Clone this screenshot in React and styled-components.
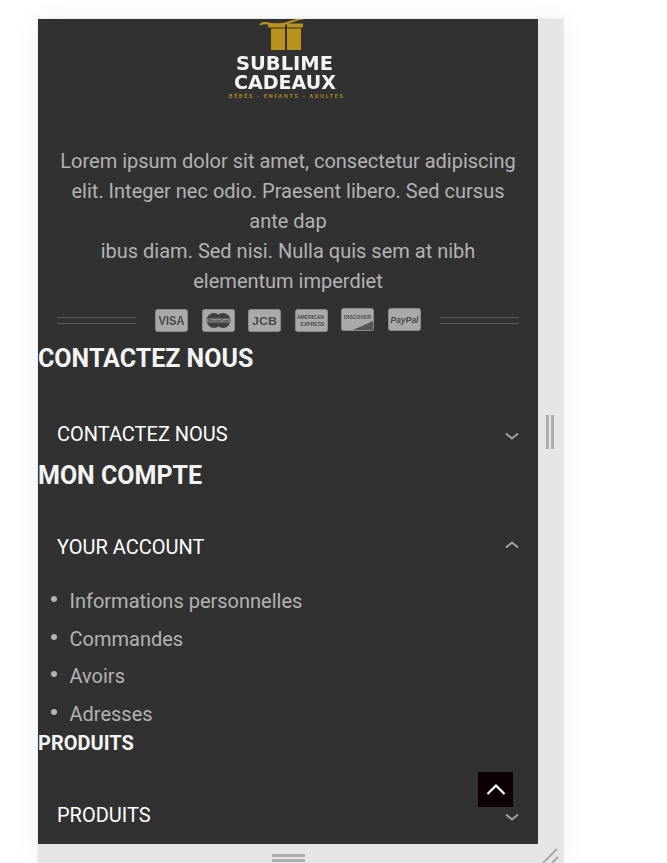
import React from 'react';
import styled, { createGlobalStyle } from 'styled-components';

const Global = createGlobalStyle`
  html, body { margin: 0; padding: 0; background: #fff; }
  body { font-family: Roboto, "Liberation Sans", sans-serif; overflow: hidden; }
  * { box-sizing: border-box; }
`;
const Page = styled.div`
  width: 667px; height: 863px; padding: 19px 0 0 38px; overflow: hidden;
`;
const Frame = styled.div`
  position: relative;
  width: 525px; height: 844px; background: #e6e6e6;
  display: grid; grid-template-columns: 500px 25px; grid-template-rows: 825px 19px;
  box-shadow: 0 0 0 1px #ececec, 0 0 24px rgba(0,0,0,.06);
`;
const Panel = styled.main`
  background: #313131; overflow: hidden; display: flex; flex-direction: column; position: relative;
`;
const LogoWrap = styled.div`
  height: 88px; display: flex; justify-content: center; margin-left: -4px;
`;
const Intro = styled.p`
  margin: 39px 0 0; padding: 0 19px; text-align: center; color: #b3b3b3;
  font-size: 20px; line-height: 30px;
`;
const PayRow = styled.div`
  display: flex; align-items: center; padding: 0 19px; margin-top: 11px; height: 26px;
`;
const Rule = styled.span`
  flex: 1; height: 7px; border-top: 1px solid #5c5c5c; border-bottom: 1px solid #5c5c5c;
`;
const Cards = styled.div`
  display: flex; gap: 13.6px; margin: 1px 19px 0; filter: blur(.35px);
`;
const Heading = styled.h2`
  margin: ${p => p.$top}px 0 0; color: #f4f4f4; font-weight: 700;
  font-size: ${p => p.$size}px; line-height: ${p => p.$lh}px;
`;
const AccRow = styled.div`
  display: flex; align-items: center; justify-content: space-between;
  margin-top: ${p => p.$top}px; padding: 0 18px 0 19px; height: 24px;
  color: #fff; font-size: 20px;
`;
const ChevronMark = styled.svg`
  transform: translateY(${p => (p.$up ? -2 : 2)}px);
`;
const List = styled.ul`
  list-style: none; margin: 24px 0 0; padding: 0 0 0 31.5px; color: #b3b3b3; font-size: 20px;
`;
const Item = styled.li`
  position: relative; height: 37.6px; line-height: 37.6px;
  &::before {
    content: ''; position: absolute; left: -19px; top: 13px; width: 6px; height: 6px;
    border-radius: 50%; background: #b3b3b3;
  }
`;
const TopBtn = styled.button`
  position: absolute; left: 440px; top: 753px; width: 35px; height: 35px; border: 0; padding: 0;
  background: #0b0003; display: flex; align-items: center; justify-content: center;
`;
const SideBar = styled.div`
  display: flex; align-items: center; justify-content: center;
`;
const VGrip = styled.div`
  width: 8px; height: 34px; margin: 1px 1px 0 0;
  border-left: 3px solid #aeaeae; border-right: 3px solid #aeaeae;
`;
const BottomBar = styled.div`
  grid-column: 1 / span 2; position: relative; display: flex; justify-content: center;
  padding: 10px 0 0 0;
`;
const HGrip = styled.div`
  width: 33px; height: 8px; border-top: 3px solid #aeaeae; border-bottom: 3px solid #aeaeae; margin-right: 25px;
`;
const Corner = styled.svg`
  position: absolute; right: 3px; bottom: 0;
`;
const LogoSvg = styled.svg`
  filter: blur(.4px);
`;

const Chevron = ({ up }) => (
  <ChevronMark $up={up} width="16" height="16" viewBox="0 0 16 16" fill="none" stroke="#a0a0a0" strokeWidth="2">
    <path d={up ? 'M2 10.5 8 5.5l6 5' : 'M2 5.5 8 10.5l6-5'} />
  </ChevronMark>
);

const logoFont = { textAnchor: 'middle', fontFamily: "'DejaVu Sans', sans-serif", fontWeight: 700, fontSize: 20, fill: '#f4f4f4', lengthAdjust: 'spacingAndGlyphs' };

const Logo = () => (
  <LogoSvg width="120" height="88" viewBox="0 0 120 88">
    <path d="M34 6c2-3 6-2 12-1 8 1 14 0 18-2 5-2 10-3 15-4" stroke="#b8921c" strokeWidth="2" fill="none" />
    <path d="M42 4.5h17v4H42zM61 4.5h16v4H61zM45 9.5h14V31H45zM61 9.5h14V31H61z" fill="#b8921c" />
    <text x="58.5" y="51" textLength="97" {...logoFont}>SUBLIME</text>
    <text x="59" y="70" textLength="102" {...logoFont}>CADEAUX</text>
    <text x="60" y="79" textAnchor="middle" fontFamily="Roboto, sans-serif" fontWeight="700" fontSize="5.6" fill="#a98a1f" textLength="114" lengthAdjust="spacing">BÉBÉS - ENFANTS - ADULTES</text>
  </LogoSvg>
);

const CardBase = ({ children, h = 0 }) => (
  <svg width="33" height="23" viewBox="0 0 33 23" style={{ marginTop: h }}>
    <rect x=".5" y=".5" width="32" height="22" rx="2" fill="#a9a9a9" stroke="#8a8a8a" />
    {children}
  </svg>
);
const cardText = { textAnchor: 'middle', fontFamily: "'Liberation Sans', sans-serif", fontWeight: 700, fill: '#484848' };

const Payment = () => (
  <Cards>
    <CardBase><text x="16.5" y="16" fontSize="12" textLength="26" lengthAdjust="spacingAndGlyphs" {...cardText}>VISA</text></CardBase>
    <CardBase>
      <circle cx="12" cy="11.5" r="7.5" fill="#3f3f3f" /><circle cx="21" cy="11.5" r="7.5" fill="#3f3f3f" />
      <rect x="5" y="9.5" width="23" height="4" fill="#8c8c8c" />
      <text x="16.5" y="13" fontSize="3.8" {...cardText}>MasterCard</text>
    </CardBase>
    <CardBase><text x="16.5" y="16" fontSize="11" textLength="25" lengthAdjust="spacingAndGlyphs" {...cardText}>JCB</text></CardBase>
    <CardBase>
      <text x="15.5" y="10" fontSize="6" textLength="27" lengthAdjust="spacingAndGlyphs" {...cardText}>AMERICAN</text>
      <text x="17.5" y="17" fontSize="6" textLength="24" lengthAdjust="spacingAndGlyphs" {...cardText}>EXPRESS</text>
    </CardBase>
    <CardBase h={-1}>
      <path d="M12 22 32 13v8a1 1 0 0 1-1 1z" fill="#555" />
      <text x="16.5" y="11" fontSize="5.4" textLength="27" lengthAdjust="spacingAndGlyphs" {...cardText}>DISCOVER</text>
    </CardBase>
    <CardBase h={-1}><text x="16.5" y="14.5" fontSize="9" fontStyle="italic" textLength="28" lengthAdjust="spacingAndGlyphs" {...cardText}>PayPal</text></CardBase>
  </Cards>
);

export default function App() {
  return (
    <Page>
      <Global />
      <Frame>
        <Panel>
          <LogoWrap><Logo /></LogoWrap>
          <Intro>
            Lorem ipsum dolor sit amet, consectetur adipiscing elit. Integer nec odio. Praesent libero. Sed cursus ante dap<br />
            ibus diam. Sed nisi. Nulla quis sem at nibh elementum imperdiet
          </Intro>
          <PayRow><Rule /><Payment /><Rule /></PayRow>
          <Heading $top={12} $size={25} $lh={28}>CONTACTEZ NOUS</Heading>
          <AccRow $top={49}>CONTACTEZ NOUS<Chevron /></AccRow>
          <Heading $top={16} $size={25} $lh={28}>MON COMPTE</Heading>
          <AccRow $top={45}>YOUR ACCOUNT<Chevron up /></AccRow>
          <List>
            <Item>Informations personnelles</Item>
            <Item>Commandes</Item>
            <Item>Avoirs</Item>
            <Item>Adresses</Item>
          </List>
          <Heading $top={-1} $size={20} $lh={22}>PRODUITS</Heading>
          <AccRow $top={49}>PRODUITS<Chevron /></AccRow>
          <TopBtn aria-label="Haut de page">
            <svg width="22" height="22" viewBox="0 0 22 22" fill="none" stroke="#fff" strokeWidth="2.2"><path d="M2.5 15 11 6.5l8.5 8.5" /></svg>
          </TopBtn>
        </Panel>
        <SideBar><VGrip /></SideBar>
        <BottomBar>
          <HGrip />
          <Corner width="20" height="19" viewBox="0 0 20 19" fill="none" stroke="#a8a8a8" strokeWidth="2">
            <path d="M3 19 17 5M12 19l6-6" />
          </Corner>
        </BottomBar>
      </Frame>
    </Page>
  );
}
